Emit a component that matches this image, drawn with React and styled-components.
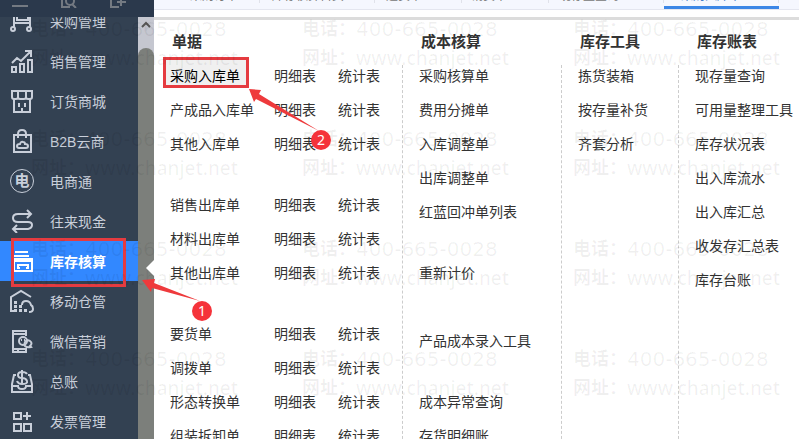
import React from "react";
import styled, { createGlobalStyle } from "styled-components";

const docs = [
  [
    { name: "采购入库单", active: true },
    { name: "产成品入库单" },
    { name: "其他入库单" },
  ],
  [{ name: "销售出库单" }, { name: "材料出库单" }, { name: "其他出库单" }],
  [
    { name: "要货单" },
    { name: "调拨单" },
    { name: "形态转换单" },
    { name: "组装拆卸单" },
  ],
];

const costs = [
  { gap: 0, items: ["采购核算单", "费用分摊单", "入库调整单", "出库调整单", "红蓝回冲单列表"] },
  { gap: 27, items: ["重新计价"] },
  { gap: 34, items: ["产品成本录入工具"] },
  { gap: 27, items: ["成本异常查询", "存货明细账"] },
];

const tools = ["拣货装箱", "按存量补货", "齐套分析"];

const reports = [
  "现存量查询",
  "可用量整理工具",
  "库存状况表",
  "出入库流水",
  "出入库汇总",
  "收发存汇总表",
  "库存台账",
];

const tabs = [
  { name: "采购订单", width: 106, indent: 36 },
  { name: "库存核算首页", width: 115, indent: 12 },
  { name: "进货单", width: 87, indent: 11 },
  { name: "销货单", width: 87, indent: 9 },
  { name: "现存量查询", width: 115, indent: 10 },
  { name: "采购入库单", width: 115, indent: 17, active: true },
];

const icons = {
  cart: (
    <>
      <path d="M1 6h3v12M4 14h17M7 5v6h11V5M20 5v13" />
      <circle cx="3" cy="20" r="2" />
      <circle cx="19" cy="20" r="2" />
    </>
  ),
  sales: (
    <path d="M2 18h4v5H2zM10 15h4v8h-4zM18 11h4v12h-4zM2 14l5-5 4 3L21 2M15 2h6v6" />
  ),
  shop: (
    <>
      <path d="M2 2h20v6q0 2-2 2h-2q-2 0-2-2 0 2-2 2h-4q-2 0-2-2 0 2-2 2H4q-2 0-2-2zM8 2v6M16 2v6" />
      <path d="M4 10v13h16V10M9 14v4M15 14v4M12 19v4" />
    </>
  ),
  bag: (
    <>
      <path d="M4 6h17v17H4zM8 9V5q0-4 4-4t4 4v4" />
      <path d="M9 19q-2 0-2-2t3-2q1-3 3-2 2 0 2 2 3 0 3 2t-2 2z" />
    </>
  ),
  money: (
    <path d="M20 5H8q-5 0-5 4t5 4h10q4 0 4 3t-4 4H4M17 1l4 4-4 4M7 16l-4 4 4 4" />
  ),
  stock: (
    <>
      <path d="M5 3h13M3 7h16" />
      <path d="M3 9h20v4H3z" fill="currentColor" stroke="none" />
      <path d="M4 12v10h18V12M8 19v-3h10v3M7 19h3M16 19h3" />
    </>
  ),
  store: (
    <>
      <path d="M1 23V8l10-6 10 6M1 22h3M12 16q0-4 4-4t5 4q2 1 2 4t-4 3" />
      <path
        d="M4 12h3v3H4zM4 16h3v3H4zM9 16h3v3H9zM4 20h3v3H4zM9 20h3v3H9zM14 20h3v3h-3z"
        fill="currentColor"
        stroke="none"
      />
    </>
  ),
  wechat: (
    <>
      <path d="M16 7V2H3v21h13v-4M3 5h13M3 20h13M8 21v2" />
      <circle cx="13" cy="12" r="4" />
      <path d="M15 13q2-3 5-1 3 2 0 5l1 1q-4 1-6-1-1-2 0-4M11 11h1M14 11h1" />
    </>
  ),
  ledger: (
    <>
      <path d="M6 6H4L2 15v8h20v-8l-2-9h-2M2 17h6q0 3 4 3t4-3h6" />
      <path d="M17 5q-1-2-5-2-4 0-4 3t4 3 5 3-5 3q-4 0-5-3M12 1v15" />
    </>
  ),
  invoice: (
    <path d="M4 4h7v6H4zM4 15h7v7H4zM14 15h7v7h-7zM17 3v8M13 7h8" />
  ),
};

const menu = [
  { name: "采购管理", icon: "cart" },
  { name: "销售管理", icon: "sales" },
  { name: "订货商城", icon: "shop" },
  { name: "B2B云商", icon: "bag" },
  { name: "电商通" },
  { name: "往来现金", icon: "money" },
  { name: "库存核算", icon: "stock", active: true },
  { name: "移动仓管", icon: "store" },
  { name: "微信营销", icon: "wechat" },
  { name: "总账", icon: "ledger" },
  { name: "发票管理", icon: "invoice" },
];

function Icon({ name }) {
  return (
    <svg
      width="24"
      height="24"
      viewBox="0 0 24 24"
      fill="none"
      stroke="currentColor"
      strokeWidth="2"
      aria-hidden="true"
    >
      {icons[name]}
    </svg>
  );
}

function Sidebar() {
  return (
    <Side>
      <SideTop>
        <TopButton aria-label="菜单">
          <svg width="18" height="8" fill="none" stroke="currentColor" strokeWidth="2">
            <path d="M1 6h16" />
          </svg>
        </TopButton>
        <TopButton aria-label="查找">
          <svg width="18" height="8" fill="none" stroke="currentColor" strokeWidth="2">
            <path d="M2 0v7h8M12 4l4 4" />
            <circle cx="10" cy="1" r="4" />
          </svg>
        </TopButton>
        <TopButton aria-label="新增">
          <svg width="18" height="8" fill="none" stroke="currentColor" strokeWidth="2">
            <path d="M2 0v7h8M8 2h9M12 0v6" />
          </svg>
        </TopButton>
      </SideTop>
      <SideBody>
        <Nav>
          {menu.map((item) => (
            <NavItem key={item.name} href="#" $active={item.active}>
              {item.icon ? <Icon name={item.icon} /> : <RoundMark>电</RoundMark>}
              {item.name}
            </NavItem>
          ))}
        </Nav>
        <Scrollbar>
          <ScrollUp aria-label="向上">
            <svg width="12" height="8" fill="none" stroke="currentColor" strokeWidth="2">
              <path d="M2 7l4-4 4 4" />
            </svg>
          </ScrollUp>
          <Thumb />
        </Scrollbar>
      </SideBody>
      <Pointer />
    </Side>
  );
}

function Panel() {
  return (
    <Columns>
      <Column>
        <Title>单据</Title>
        <List $line>
          {docs.map((group, i) => (
            <Group key={i} $gap={i ? 27 : 0}>
              {group.map((doc) => (
                <DocRow key={doc.name}>
                  <Link href="#" $marked={doc.active}>
                    {doc.name}
                  </Link>
                  <Link href="#">明细表</Link>
                  <Link href="#">统计表</Link>
                </DocRow>
              ))}
            </Group>
          ))}
        </List>
      </Column>
      <Column>
        <Title>成本核算</Title>
        <List $line>
          {costs.map((group, i) => (
            <Group key={i} $gap={group.gap}>
              {group.items.map((name) => (
                <Link key={name} href="#">
                  {name}
                </Link>
              ))}
            </Group>
          ))}
        </List>
      </Column>
      <Column>
        <Title>库存工具</Title>
        <List $line>
          <Group>
            {tools.map((name) => (
              <Link key={name} href="#">
                {name}
              </Link>
            ))}
          </Group>
        </List>
      </Column>
      <Column>
        <Title>库存账表</Title>
        <List>
          <Group>
            {reports.map((name) => (
              <Link key={name} href="#">
                {name}
              </Link>
            ))}
          </Group>
        </List>
      </Column>
    </Columns>
  );
}

function Watermark() {
  return (
    <Marks aria-hidden="true">
      {Array.from({ length: 12 }, (_, i) => (
        <Mark key={i}>
          <MarkLine>
            电话：<Phone>400-665-0028</Phone>
          </MarkLine>
          <MarkLine>
            网址：<Site>www.chanjet.net</Site>
          </MarkLine>
        </Mark>
      ))}
    </Marks>
  );
}

function App() {
  return (
    <>
      <GlobalStyle />
      <Page>
        <Sidebar />
        <Main>
          <TabBar>
            {tabs.map((tab) => (
              <Tab
                key={tab.name}
                $width={tab.width}
                $indent={tab.indent}
                $active={tab.active}
              >
                {tab.name}
              </Tab>
            ))}
          </TabBar>
          <Panel />
        </Main>
        <Watermark />
        <Arrows width="340" height="320" aria-hidden="true">
          <path d="M142 280l13-1-1 4 46 18-48-13-1 4z" />
          <path d="M249 89l12 1-2 4 60 37-63-32-2 3z" />
        </Arrows>
        <Step $x={192} $y={301}>1</Step>
        <Step $x={311} $y={130}>2</Step>
      </Page>
    </>
  );
}

export default App;

const GlobalStyle = createGlobalStyle`
  * {
    box-sizing: border-box;
  }

  body {
    margin: 0;
    font-family: "Liberation Sans", "Noto Sans CJK SC", sans-serif;
    font-size: 14px;
    color: #333;
    background: #fff;
  }

  a {
    color: inherit;
    text-decoration: none;
  }

  button {
    padding: 0;
    border: 0;
    background: none;
    color: inherit;
    font: inherit;
  }
`;

const Page = styled.div`
  position: relative;
  display: flex;
  height: 100vh;
  overflow: hidden;
`;

const Side = styled.aside`
  position: relative;
  display: flex;
  flex-direction: column;
  flex: 0 0 154px;
  background: #334152;
`;

const SideTop = styled.div`
  display: flex;
  flex: 0 0 17px;
  align-items: flex-start;
  gap: 31px;
  padding-left: 11px;
  background: #2b394c;
  color: #747a82;
`;

const TopButton = styled.button`
  display: flex;
  width: 18px;
  height: 8px;
`;

const SideBody = styled.div`
  display: flex;
  flex: 1;
  min-height: 0;
  overflow: hidden;
`;

const Nav = styled.nav`
  flex: 1;
  margin-top: -16px;
`;

const NavItem = styled.a`
  position: relative;
  display: flex;
  align-items: center;
  gap: 16px;
  height: 40px;
  padding-left: 10px;
  color: ${(p) => (p.$active ? "#fff" : "#c9cfda")};
  background: ${(p) => (p.$active ? "#3288ff" : "none")};
  font-weight: ${(p) => (p.$active ? "bold" : "normal")};

  &::after {
    content: "";
    display: ${(p) => (p.$active ? "block" : "none")};
    position: absolute;
    inset: -3px 12px -6px 11px;
    border: 3px solid #e53b40;
  }
`;

const RoundMark = styled.span`
  width: 24px;
  height: 24px;
  border: 1px solid currentColor;
  border-radius: 50%;
  font-size: 15px;
  font-weight: bold;
  line-height: 21px;
  text-align: center;
`;

const Scrollbar = styled.div`
  display: flex;
  flex-direction: column;
  width: 16px;
  background: #c5c7d0;
`;

const ScrollUp = styled.button`
  display: flex;
  justify-content: center;
  height: 31px;
  padding-top: 3px;
  color: #555;
`;

const Thumb = styled.div`
  flex: 1;
  border-radius: 8px 8px 0 0;
  background: #7c7f7b;
`;

const Pointer = styled.span`
  position: absolute;
  top: 260px;
  right: 0;
  border: 8px solid transparent;
  border-left: 0;
  border-right-color: #fff;
`;

const Main = styled.main`
  flex: 1;
  min-width: 0;
`;

const TabBar = styled.div`
  display: flex;
  height: 20px;
  border-bottom: 3px solid #dcdcdc;
  background: linear-gradient(#f5f7fe 9px, #e4e6ef 9px, #e4e6ef 10px, #fff 10px);
`;

const Tab = styled.button`
  position: relative;
  flex: 0 0 ${(p) => p.$width}px;
  height: 17px;
  margin-top: -8px;
  padding: 0 0 6px ${(p) => p.$indent}px;
  border-bottom: 3px solid ${(p) => (p.$active ? "#3b86e6" : "transparent")};
  color: ${(p) => (p.$active ? "#3b78c8" : "#777")};
  font-size: 12px;
  line-height: 8px;
  text-align: left;
  white-space: nowrap;

  &::after {
    content: "";
    position: absolute;
    top: 0;
    right: 0;
    width: 1px;
    height: 11px;
    background: #e0e2ea;
  }
`;

const Columns = styled.div`
  display: grid;
  grid-template-columns: 249fr 159fr 117fr 120fr;
`;

const Column = styled.section`
  display: flex;
  flex-direction: column;
  min-width: 0;
  white-space: nowrap;
`;

const Title = styled.h2`
  margin: 0;
  padding-left: 18px;
  font-size: 15px;
  line-height: 44px;
  padding-bottom: 1px;
`;

const List = styled.div`
  flex: 1;
  padding-left: 16px;
  border-right: ${(p) => (p.$line ? "1px dashed #ccc" : "0")};
`;

const Group = styled.div`
  display: flex;
  flex-direction: column;
  align-items: flex-start;
  gap: 12px;
  padding-top: ${(p) => p.$gap || 0}px;
  margin-bottom: 12px;
`;

const DocRow = styled.div`
  display: grid;
  grid-template-columns: 104px 64px auto;
  justify-items: start;
`;

const Link = styled.a`
  position: relative;
  line-height: 22px;
  color: ${(p) => (p.$marked ? "#000" : "inherit")};

  &::after {
    content: "";
    display: ${(p) => (p.$marked ? "block" : "none")};
    position: absolute;
    inset: -8px -9px -1px -7px;
    border: 3px solid #e53b40;
    background: rgba(0, 0, 0, 0.06);
  }
`;

const Marks = styled.div`
  position: absolute;
  inset: 0 -271px 0 0;
  display: grid;
  grid-template-columns: repeat(auto-fill, 271px);
  grid-auto-rows: 110px;
  padding: 15px 0 0 31px;
  pointer-events: none;
`;

const Mark = styled.div`
  color: rgba(0, 0, 0, 0.06);
  font-size: 18px;
  font-weight: bold;
  white-space: nowrap;
`;

const MarkLine = styled.div`
  display: flex;
  height: 29px;
  line-height: 29px;
`;

const Phone = styled.span`
  font-family: "DejaVu Sans", sans-serif;
  font-size: 20px;
  font-weight: normal;
`;

const Site = styled.span`
  font-family: "Noto Sans", sans-serif;
  font-size: 19px;
  font-weight: 500;
`;

const Arrows = styled.svg`
  position: absolute;
  top: 0;
  left: 0;
  fill: #ee3a3c;
  pointer-events: none;
`;

const Step = styled.span`
  position: absolute;
  left: ${(p) => p.$x}px;
  top: ${(p) => p.$y}px;
  width: 20px;
  height: 20px;
  border-radius: 50%;
  background: #f5333a;
  color: #fff;
  font-family: "Noto Sans", sans-serif;
  line-height: 20px;
  text-align: center;
`;
